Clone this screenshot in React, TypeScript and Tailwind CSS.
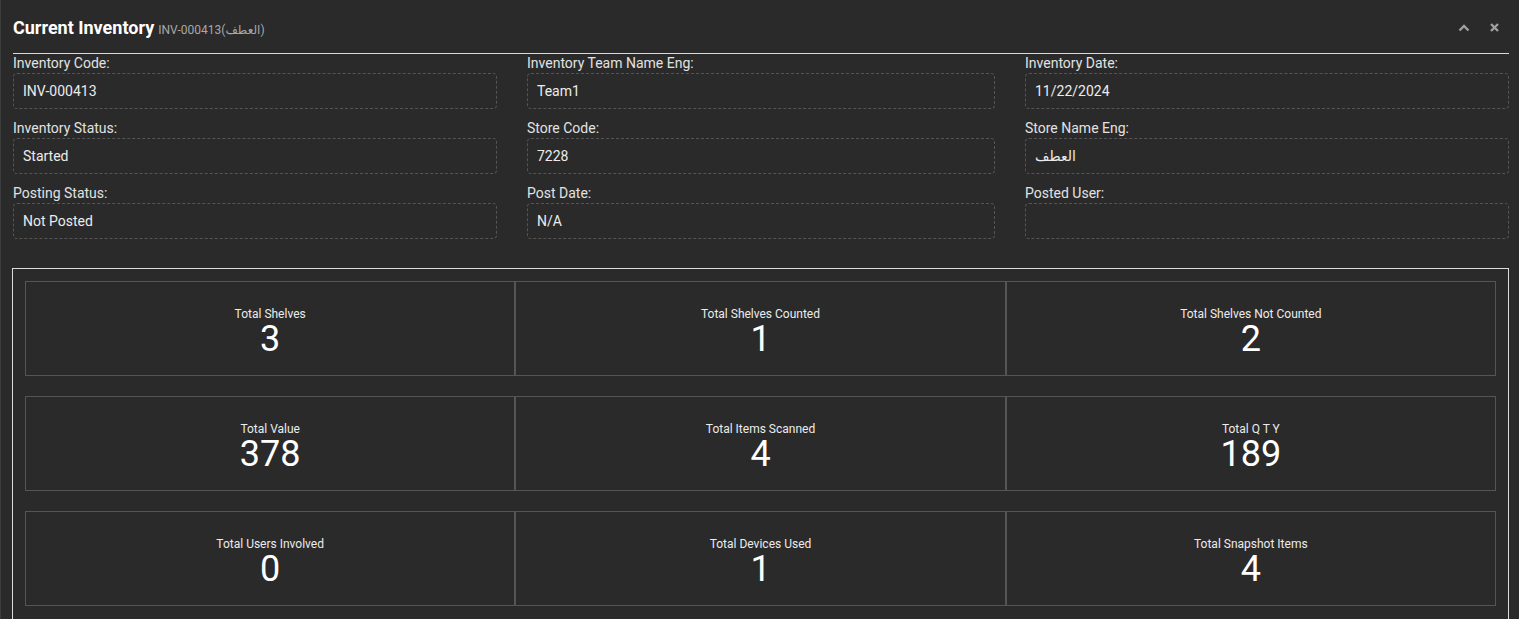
import React from "react";

const fields: [string, string][] = [
  ["Inventory Code:", "INV-000413"],
  ["Inventory Team Name Eng:", "Team1"],
  ["Inventory Date:", "11/22/2024"],
  ["Inventory Status:", "Started"],
  ["Store Code:", "7228"],
  ["Store Name Eng:", "العطف"],
  ["Posting Status:", "Not Posted"],
  ["Post Date:", "N/A"],
  ["Posted User:", ""],
];

const stats: [string, string][][] = [
  [
    ["Total Shelves", "3"],
    ["Total Shelves Counted", "1"],
    ["Total Shelves Not Counted", "2"],
  ],
  [
    ["Total Value", "378"],
    ["Total Items Scanned", "4"],
    ["Total Q T Y", "189"],
  ],
  [
    ["Total Users Involved", "0"],
    ["Total Devices Used", "1"],
    ["Total Snapshot Items", "4"],
  ],
];

export default function App() {
  return (
    <div
      className="w-[1519px] h-[619px] overflow-hidden bg-[#2a2a2a] border-l border-[#3d3d3d] text-[#e4e4e4]"
      style={{ fontFamily: 'Roboto, "DejaVu Sans", "Noto Sans", sans-serif' }}
    >
      <div className="px-[12px]">
        <div className="h-[54px] flex items-center justify-between border-b border-[#d9d9d9] pt-[2px] w-[1496px]">
          <div className="flex items-baseline gap-[4px]">
            <span className="text-[18px] font-bold text-white">Current Inventory</span>
            <span className="text-[12px] text-[#a8a8a8]">INV-000413(العطف)</span>
          </div>
          <div className="flex items-center gap-[20px] pr-[10px] text-[#a0a0a0]">
            <svg width="12" height="8" viewBox="0 0 12 8">
              <path d="M1.5 6.5 L6 2 L10.5 6.5" fill="none" stroke="currentColor" strokeWidth="2.4" />
            </svg>
            <svg width="9" height="9" viewBox="0 0 9 9">
              <path d="M1 1 L8 8 M8 1 L1 8" fill="none" stroke="currentColor" strokeWidth="2.4" />
            </svg>
          </div>
        </div>
        <div className="grid grid-cols-[484px_468px_484px] gap-x-[30px] gap-y-[10px]">
          {fields.map(([label, value]) => (
            <div key={label} className="flex flex-col">
              <div className="h-[19px] leading-[19px] text-[14px] text-[#e2e2e2]">{label}</div>
              <div className="h-[36px] border border-dashed border-[#555] rounded-[4px] px-[9px] flex items-center text-[14px] text-[#ececec]">
                {value}
              </div>
            </div>
          ))}
        </div>
        <div className="mt-[29px] -ml-px w-[1497px] border border-[#dcdcdc] p-[12px] flex flex-col gap-[20px] pb-[40px]">
          {stats.map((row, i) => (
            <div key={i} className="grid grid-cols-3">
              {row.map(([label, value]) => (
                <div
                  key={label}
                  className="h-[95px] border border-[#555] flex flex-col items-center justify-center pt-[7px]"
                >
                  <div className="text-[12px] leading-[14px] text-[#ececec]">{label}</div>
                  <div className="text-[36px] leading-[37px] text-white">{value}</div>
                </div>
              ))}
            </div>
          ))}
        </div>
      </div>
    </div>
  );
}
